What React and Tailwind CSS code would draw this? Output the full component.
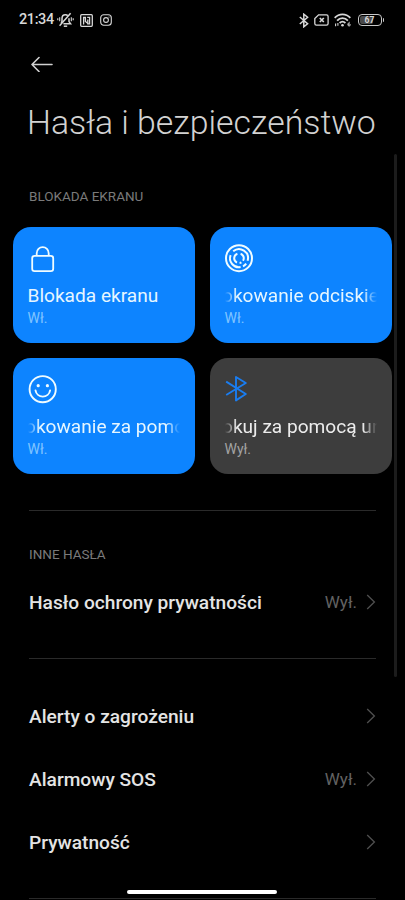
import clsx from "clsx";

const tiles = [
  { id: "lock", icon: LockIcon, label: "Blokada ekranu", state: "Wł.", active: true },
  { id: "finger", icon: FingerprintIcon, label: "okowanie odciskie", state: "Wł.", active: true, scrolling: true },
  { id: "face", icon: FaceIcon, label: "okowanie za pomo", state: "Wł.", active: true, scrolling: true },
  { id: "bluetooth", icon: BluetoothIcon, label: "okuj za pomocą ur", state: "Wył.", active: false, scrolling: true },
];

const moreRows = [
  { label: "Alerty o zagrożeniu" },
  { label: "Alarmowy SOS", value: "Wył." },
  { label: "Prywatność" },
];

export default function App() {
  return (
    <div className="relative flex h-[900px] w-[405px] flex-col overflow-hidden bg-black font-['Roboto',sans-serif] text-[#e4e4e4]">
      <StatusBar />

      <header className="px-[27px]">
        <div className="flex h-[48px] items-center pl-[4px]">
          <BackArrow />
        </div>
        <h1 className="mt-[14px] h-[42px] whitespace-nowrap text-[33.8px] font-light leading-[42px] text-[#d2d2d2]">
          Hasła i bezpieczeństwo
        </h1>
      </header>

      <main className="flex flex-col">
        <SectionTitle className="mt-[44px]">BLOKADA EKRANU</SectionTitle>

        <div className="mt-[23px] grid grid-cols-2 gap-[15px] px-[13px]">
          {tiles.map((tile) => (
            <Tile key={tile.id} {...tile} />
          ))}
        </div>

        <Divider className="mt-[36px]" />

        <SectionTitle className="mt-[35px]">INNE HASŁA</SectionTitle>
        <div className="mt-[9px]">
          <Row label="Hasło ochrony prywatności" value="Wył." />
        </div>

        <Divider className="mt-[24px]" />

        <div className="mt-[26px]">
          {moreRows.map((row) => (
            <Row key={row.label} {...row} />
          ))}
        </div>

        <Divider className="mt-[24px]" />
      </main>

      {/* Scrollbar */}
      <div className="absolute left-[394px] top-[154px] h-[523px] w-[3px] rounded-full bg-[#1c1c1c]" />

      {/* Home indicator */}
      <div className="absolute left-[127px] top-[890px] h-[4px] w-[150px] rounded-full bg-white" />
    </div>
  );
}

function StatusBar() {
  return (
    <div className="flex h-[40px] shrink-0 items-center justify-between pl-[19px] pr-[21px] text-[#d8d8d8]">
      <div className="flex items-center">
        <span className="pt-[1px] text-[14.5px] font-medium leading-none tracking-[-0.4px]">21:34</span>
        <MutedBell />
        <NfcIcon />
        <InstagramIcon />
      </div>
      <div className="flex items-center">
        <svg width="10" height="15" viewBox="0 0 10 15" fill="none" stroke="currentColor" strokeWidth="1.5" className="mr-[5px]">
          <path d="M0.8 4 8.6 10.8 4.8 13.8V1.2L8.6 4.2 0.8 11" />
        </svg>
        <svg width="15" height="12" viewBox="0 0 15 12" fill="none" stroke="currentColor" strokeWidth="1.3" className="mr-[5px]">
          <path d="M4.6 0.8H12.5a1.6 1.6 0 0 1 1.6 1.6V9.6a1.6 1.6 0 0 1-1.6 1.6H2.4A1.6 1.6 0 0 1 0.8 9.6V4.6Z" />
          <path d="M5.8 4 9.8 8M9.8 4 5.8 8" strokeWidth="1.7" />
        </svg>
        <WifiIcon />
        <Battery level={67} />
      </div>
    </div>
  );
}

function Battery({ level }) {
  return (
    <div className="flex items-center">
      <div className="relative flex h-[12px] w-[24px] items-center justify-center overflow-hidden rounded-[4px] border border-[#c8c8c8]">
        <div className="absolute inset-y-[1px] left-[1px] rounded-[2px] bg-[#4a4a4a]" style={{ width: `${level * 0.9}%` }} />
        <span className="relative text-[8.5px] font-bold leading-none">{level}</span>
      </div>
      <div className="ml-[1px] h-[4px] w-[1.5px] rounded-r bg-[#c8c8c8]" />
    </div>
  );
}

function SectionTitle({ children, className }) {
  return (
    <h2 className={clsx("h-[16px] px-[29px] text-[13.5px] leading-[16px] text-[#7a7a7a]", className)}>
      {children}
    </h2>
  );
}

function Divider({ className }) {
  return <div className={clsx("mx-[29px] h-px shrink-0 bg-[#2a2a2a]", className)} />;
}

function Tile({ icon: Icon, label, state, active, scrolling }) {
  return (
    <div
      className={clsx(
        "flex h-[116px] min-w-0 flex-col rounded-[18px] px-[15px] pt-[17px]",
        active ? "bg-[#0d84ff]" : "bg-[#3d3d3d]"
      )}
    >
      <div className={clsx("h-[30px]", active ? "text-[#f0fcff]" : "text-[#1a7df0]")}>
        <Icon />
      </div>
      <div
        className={clsx(
          "-ml-[0.5px] mt-[10px] h-[24px] overflow-hidden whitespace-nowrap text-[19.1px] leading-[24px]",
          active ? "text-[#e6f6ff]" : "text-[#ececec]",
          scrolling && "[mask-image:linear-gradient(to_right,transparent,black_12px,black_calc(100%-14px),transparent)]"
        )}
      >
        <span className={clsx("inline-block", scrolling && "-ml-[2.5px]")}>{label}</span>
      </div>
      <p className={clsx("-ml-[0.5px] text-[14px] leading-[20px]", active ? "text-[#80c4ff]" : "text-[#a3a3a3]")}>{state}</p>
    </div>
  );
}

function Row({ label, value }) {
  return (
    <div className="flex h-[63px] items-center px-[29px]">
      <span className="flex-1 text-[19.15px] font-medium leading-[24px]">{label}</span>
      {value && <span className="mb-[2px] mr-[9px] text-[17px] leading-[22px] text-[#626262]">{value}</span>}
      <svg width="10" height="16" viewBox="0 0 10 16" fill="none" stroke="#505050" strokeWidth="1.3" className="mb-[2px]">
        <path d="M1.2 1 8.4 8 1.2 15" />
      </svg>
    </div>
  );
}

function BackArrow() {
  return (
    <svg width="22" height="16" viewBox="0 0 22 16" fill="none" stroke="#d0d0d0" strokeWidth="1.6" strokeLinecap="round" strokeLinejoin="round">
      <path d="M21 8.5H1M8 1.5 1 8.5 8 15.5" />
    </svg>
  );
}

function MutedBell() {
  return (
    <svg width="17" height="16" viewBox="0 0 17 16" fill="none" stroke="currentColor" strokeWidth="1.5" className="ml-[3px]">
      <path d="M4.2 11 5 9.4V6.4C5 4 6.4 2.7 8.4 2.7c1 0 1.8.3 2.4.9" />
      <path d="M12 6.2v3.4l1.6 2.2H6.4" />
      <path d="M6.8 14.2h3.4" />
      <path d="M2.6 13.8 13.6 1.3" />
      <path d="M2.7 5.3v4M0.8 6.3v2M14.3 5.3v4M16.2 6.3v2" strokeWidth="1.1" />
    </svg>
  );
}

function NfcIcon() {
  return (
    <svg width="13" height="13" viewBox="0 0 13 13" fill="none" stroke="currentColor" strokeWidth="1.3" className="ml-[6px]">
      <rect x="0.7" y="0.7" width="11.6" height="11.6" rx="1" />
      <path d="M3.6 10.4V3.5H5.4V7.4L8 9.6" />
      <path d="M7.2 3.3H9.6V9.8H7.8V5.5" />
    </svg>
  );
}

function InstagramIcon() {
  return (
    <svg width="12" height="12" viewBox="0 0 12 12" fill="none" stroke="currentColor" strokeWidth="1.1" className="ml-[7px]">
      <rect x="0.7" y="0.7" width="10.6" height="10.6" rx="3" />
      <circle cx="6" cy="6" r="2.4" />
      <circle cx="9" cy="3" r="0.6" fill="currentColor" stroke="none" />
    </svg>
  );
}

function WifiIcon() {
  return (
    <svg width="17" height="14" viewBox="0 0 17 14" fill="none" stroke="currentColor" strokeWidth="1.8" className="mr-[7px]">
      <path d="M0.7 4.9C5 .1 12 .1 16.3 4.9" />
      <path d="M3.1 7.6C6.2 4.2 10.8 4.2 13.9 7.6" />
      <path d="M5.6 10C7.4 8.3 9.6 8.3 11.4 10" />
      <circle cx="8.5" cy="12.2" r="1.3" fill="currentColor" stroke="none" />
      <path d="M1.6 13.3v-2.8M3.9 10v2.8" strokeWidth="1.1" />
      <path d="M15.6 9.2C14.5 9.6 14 10.5 14 11.6" strokeWidth="1" />
      <circle cx="15.1" cy="11.9" r="1.1" strokeWidth="1" />
    </svg>
  );
}

function LockIcon() {
  return (
    <svg width="30" height="30" viewBox="0 0 30 30" fill="none" stroke="currentColor" strokeWidth="1.8">
      <rect x="4.2" y="11.8" width="21" height="15.4" rx="2.4" />
      <path d="M8.7 12V9.2a6 6 0 0 1 12 0V12" />
    </svg>
  );
}

function FingerprintIcon() {
  return (
    <svg width="28" height="30" viewBox="0 0 28 30" fill="none" stroke="currentColor" strokeWidth="2">
      <circle cx="14" cy="14.2" r="13" />
      <path d="M8.2 7.3A9 9 0 0 1 22.6 16.8" />
      <path d="M21.2 19.6A9 9 0 0 1 18 22.3" />
      <path d="M15.6 23.1A9 9 0 0 1 5.6 11.1" />
      <path d="M12.4 9.7A4.8 4.8 0 0 0 12 18.6M15.6 9.7A4.8 4.8 0 0 1 18 16.8M16.4 18.4A4.8 4.8 0 0 1 14.6 19" />
    </svg>
  );
}

function FaceIcon() {
  return (
    <svg width="30" height="30" viewBox="0 0 30 30" fill="none" stroke="currentColor" strokeWidth="1.9">
      <circle cx="14.7" cy="14.2" r="13.1" />
      <circle cx="10.2" cy="10.7" r="1.6" fill="currentColor" stroke="none" />
      <circle cx="19.4" cy="10.7" r="1.6" fill="currentColor" stroke="none" />
      <path d="M7.5 15.4a7.4 7.4 0 0 0 14.6 0" strokeLinecap="round" />
    </svg>
  );
}

function BluetoothIcon() {
  return (
    <svg width="24" height="30" viewBox="0 0 24 30" fill="none" stroke="currentColor" strokeWidth="1.9" strokeLinejoin="round">
      <path d="M1.2 6.6 20.8 19 11 25.4V2L20.8 8 1.2 20" />
    </svg>
  );
}
